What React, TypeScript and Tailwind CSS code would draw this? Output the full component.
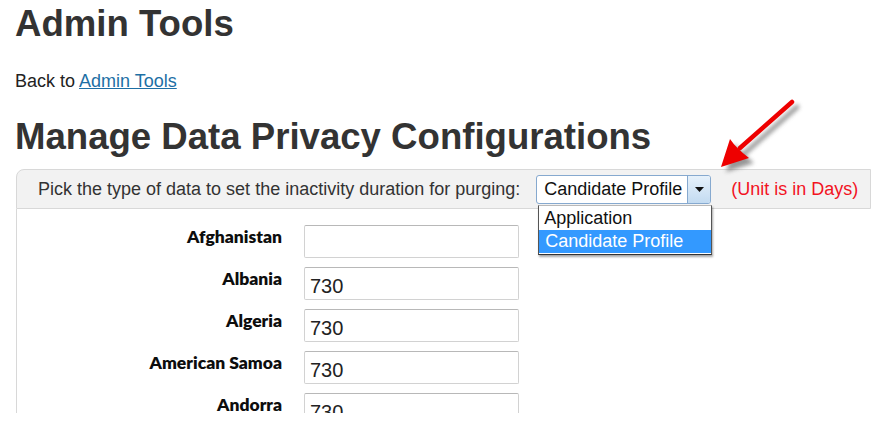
import React from 'react'

const countries = [
  { name: 'Afghanistan', value: '' },
  { name: 'Albania', value: '730' },
  { name: 'Algeria', value: '730' },
  { name: 'American Samoa', value: '730' },
  { name: 'Andorra', value: '730' },
]

function RedArrow() {
  return (
    <svg
      className="pointer-events-none absolute left-[700px] top-[90px]"
      width="110"
      height="90"
      viewBox="0 0 110 90"
    >
      <defs>
        <filter id="arrowShadow" x="-20%" y="-20%" width="150%" height="150%">
          <feGaussianBlur stdDeviation="2.2" />
        </filter>
      </defs>
      <g transform="translate(5 5)" fill="#6b6b6b" stroke="#6b6b6b" opacity="0.7" filter="url(#arrowShadow)">
        <path d="M92 12 L40 58" strokeWidth="4.5" strokeLinecap="round" fill="none" />
        <path d="M21 77 L30 49 Q36 58 49 68 Z" stroke="none" />
      </g>
      <g fill="#ee0000" stroke="#ee0000">
        <path d="M92 12 L40 58" strokeWidth="4.5" strokeLinecap="round" fill="none" />
        <path d="M21 77 L30 49 Q36 58 49 68 Z" stroke="none" />
      </g>
    </svg>
  )
}

export default function App() {
  return (
    <div className="relative h-[442px] w-[882px] overflow-hidden bg-white font-['Liberation_Sans',Arial,sans-serif] text-[#333]">
      <div className="h-[413px] overflow-hidden pl-[15px]">
        <h1 className="pt-[4px] text-[36.6px] font-bold leading-[40px] text-[#333]">Admin Tools</h1>
        <p className="mt-[27px] text-[18px] leading-[20px] text-[#222]">
          Back to{' '}
          <a href="#" className="text-[#1d6fa5] underline decoration-[#1d6fa5]">
            Admin Tools
          </a>
        </p>
        <h2 className="mt-[26px] text-[36.6px] font-bold leading-[40px] text-[#333]">
          Manage Data Privacy Configurations
        </h2>

        <div className="ml-[1px] mt-[12px] w-[855px]">
          <div className="flex h-[40px] items-center rounded-tl-[8px] border border-[#d8d8d8] bg-[#f2f2f2] pl-[21px]">
            <span className="text-[18px] text-[#333]">
              Pick the type of data to set the inactivity duration for purging:
            </span>
            <div className="relative ml-[16px] h-[29px] w-[175px] rounded-[3px] border border-[#86a9cf] bg-white">
              <div className="pl-[7px] pt-[3px] text-[18px] leading-[21px] text-[#111]">Candidate Profile</div>
              <div className="absolute bottom-0 right-0 top-0 flex w-[23px] items-center justify-center rounded-r-[2px] border-l border-[#86a9cf] bg-gradient-to-b from-[#e6f1fb] to-[#c3dbf1]">
                <svg width="9" height="5" viewBox="0 0 9 5">
                  <path d="M0 0 L9 0 L4.5 5 Z" fill="#111" />
                </svg>
              </div>
              <div className="absolute left-[1px] top-[29px] z-10 h-[50px] w-[174px] border border-t-[#b9b9b9] border-l-[#555] border-r-[#555] border-b-[#333] bg-white shadow-[1px_2px_2px_rgba(0,0,0,0.35)]">
                <div className="h-[24px] pl-[5px] pt-[2px] text-[18px] leading-[21px] text-[#111]">Application</div>
                <div className="h-[23px] bg-[#3399ff] pl-[6px] pt-[1px] text-[18px] leading-[21px] text-white">
                  Candidate Profile
                </div>
              </div>
            </div>
            <span className="ml-[20px] text-[18px] text-[#f2131f]">(Unit is in Days)</span>
          </div>

          <div className="h-[300px] border-l border-[#d8d8d8] pt-[16px]">
            <div className="flex flex-col gap-[9px]">
              {countries.map((c) => (
                <div key={c.name} className="flex items-start">
                  <div className="w-[266px] pr-[1px] pt-[2px] text-right font-['Lato',sans-serif] text-[17.5px] font-extrabold leading-[20px] text-[#0d0d0d]">
                    {c.name}
                  </div>
                  <input
                    readOnly
                    value={c.value}
                    className="ml-[21px] h-[33px] w-[215px] rounded-[2px] border border-[#d2d2d2] border-t-[#b8b8b8] bg-white pl-[5px] pt-[5px] font-['Liberation_Sans',Arial,sans-serif] text-[20px] text-[#222] outline-none"
                  />
                </div>
              ))}
            </div>
          </div>
        </div>
      </div>
      <RedArrow />
    </div>
  )
}
